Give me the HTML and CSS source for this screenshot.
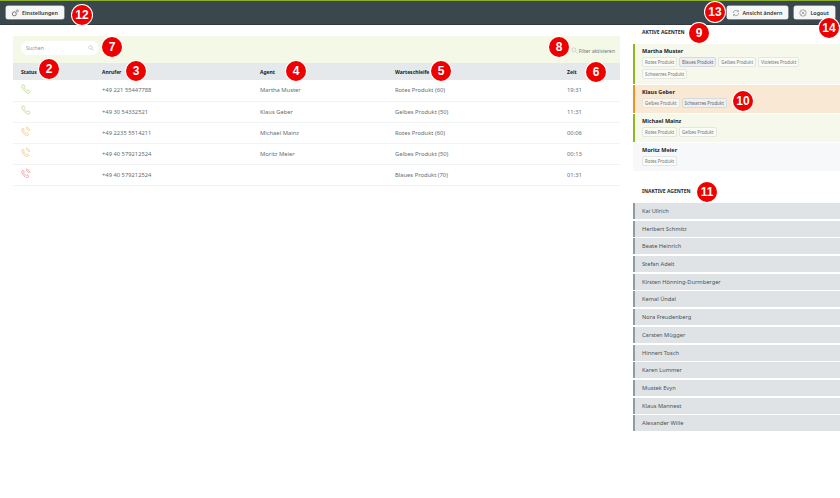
FILE: index.html
```
<!DOCTYPE html>
<html lang="de">
<head>
<meta charset="utf-8">
<title>Agenten</title>
<link rel="stylesheet" href="styles.css">
</head>
<body>
<svg class="defs" width="0" height="0">
  <defs>
    <symbol id="phone" viewBox="0 0 12 12"><path d="M1.6 1.4 3.2.9l1.5 2.3-1 1c.5 1.4 2.2 3.3 3.8 3.9l1-1 2.3 1.6-.6 1.6c-.3.6-1.1.9-1.9.7C5 9.600 2 6.500 1 3.300c-.2-.8 0-1.600.6-1.900Z" fill="none" stroke="currentColor" stroke-width="1"/></symbol>
    <symbol id="phone-out" viewBox="0 0 12 12"><path d="M1.3 3.400 2.700 2.800l1.300 2-.9.9c.4 1.200 1.800 2.800 3.200 3.300l.9-.9 2 1.400-.5 1.400c-.3.5-1 .8-1.600.6C4.400 10.800 1.800 8.200.9 5.100c-.2-.7 0-1.400.4-1.700Z" fill="none" stroke="currentColor" stroke-width="1"/><path d="M6 1.200c2.500.2 4.500 2.200 4.800 4.700M6 3c1.500.1 2.800 1.400 3 3" fill="none" stroke="currentColor" stroke-width="1"/></symbol>
    <symbol id="search" viewBox="0 0 12 12"><circle cx="5" cy="5" r="3.500" fill="none" stroke="currentColor" stroke-width="1.200"/><path d="m7.600 7.600 3.400 3.400" stroke="currentColor" stroke-width="1.400"/></symbol>
  </defs>
</svg>
<div class="app">
  <header class="topbar">
    <button class="btn"><svg class="btn-icon" viewBox="0 0 12 12"><circle cx="5" cy="7.300" r="3" fill="none" stroke="#777" stroke-width="1.500"/><circle cx="9.500" cy="2.800" r="1.600" fill="none" stroke="#777" stroke-width="1"/></svg>Einstellungen</button>
    <div class="topbar-right">
      <button class="btn"><svg class="btn-icon" viewBox="0 0 12 12"><path d="M2 6a4 4 0 0 1 7-2.600M10 6a4 4 0 0 1-7 2.600" fill="none" stroke="#777" stroke-width=".9"/><path d="M9.700 1.500v2.400H7.400M2.300 10.500V8.100h2.300" fill="none" stroke="#777" stroke-width=".8"/></svg>Ansicht ändern</button>
      <button class="btn"><svg class="btn-icon" viewBox="0 0 12 12"><circle cx="6" cy="6" r="4.800" fill="none" stroke="#777" stroke-width=".9"/><path d="m3.800 3.800 4.400 4.400M8.200 3.800 3.800 8.200" stroke="#777" stroke-width=".9"/></svg>Logout</button>
    </div>
  </header>
  <div class="content">
    <main class="calls">
      <div class="filterbar">
        <label class="search"><span>Suchen</span><svg class="search-icon"><use href="#search"/></svg></label>
        <div class="filter-toggle"><svg class="filter-icon"><use href="#search"/></svg>Filter aktivieren</div>
      </div>
      <table class="table">
        <thead>
          <tr><th class="c1">Status</th><th class="c2">Anrufer</th><th class="c3">Agent</th><th class="c4">Warteschleife</th><th>Zeit</th></tr>
        </thead>
        <tbody>
          <tr><td><svg class="ph green"><use href="#phone"/></svg></td><td>+49 221 55447788</td><td>Martha Muster</td><td>Rotes Produkt (60)</td><td>19:31</td></tr>
          <tr><td><svg class="ph green"><use href="#phone"/></svg></td><td>+49 30 54332521</td><td>Klaus Geber</td><td>Gelbes Produkt (50)</td><td>11:31</td></tr>
          <tr><td><svg class="ph orange"><use href="#phone-out"/></svg></td><td>+49 2235 5514211</td><td>Michael Mainz</td><td>Rotes Produkt (60)</td><td>00:06</td></tr>
          <tr><td><svg class="ph orange"><use href="#phone-out"/></svg></td><td>+49 40 579212524</td><td>Moritz Meier</td><td>Gelbes Produkt (50)</td><td>00:13</td></tr>
          <tr><td><svg class="ph red"><use href="#phone-out"/></svg></td><td>+49 40 579212524</td><td></td><td>Blaues Produkt (70)</td><td>01:31</td></tr>
        </tbody>
      </table>
    </main>
    <aside class="side">
      <h2 class="side-title">Aktive Agenten</h2>
      <section class="agent free">
        <h3>Martha Muster</h3>
        <div class="tags"><span class="tag">Rotes Produkt</span><span class="tag on">Blaues Produkt</span><span class="tag">Gelbes Produkt</span><span class="tag">Violettes Produkt</span><span class="tag">Schwarzes Produkt</span></div>
      </section>
      <section class="agent busy">
        <h3>Klaus Geber</h3>
        <div class="tags"><span class="tag">Gelbes Produkt</span><span class="tag on">Schwarzes Produkt</span></div>
      </section>
      <section class="agent free">
        <h3>Michael Mainz</h3>
        <div class="tags"><span class="tag">Rotes Produkt</span><span class="tag">Gelbes Produkt</span></div>
      </section>
      <section class="agent idle">
        <h3>Moritz Meier</h3>
        <div class="tags"><span class="tag">Rotes Produkt</span></div>
      </section>
      <h2 class="side-title second">Inaktive Agenten</h2>
      <ul class="inactive">
        <li>Kai Ullrich</li><li>Heribert Schmitz</li><li>Beate Heinrich</li><li>Stefan Adelt</li><li>Kirsten Hönning-Durmberger</li><li>Kemal Ündal</li><li>Nora Freudenberg</li><li>Carsten Mügger</li><li>Hinnert Tosch</li><li>Karen Lummer</li><li>Mustek Evyn</li><li>Klaus Mannest</li><li>Alexander Wille</li>
      </ul>
    </aside>
  </div>
  <span class="pin p2">2</span><span class="pin p3">3</span><span class="pin p4">4</span><span class="pin p5">5</span><span class="pin p6">6</span><span class="pin p7">7</span><span class="pin p8">8</span><span class="pin p9">9</span><span class="pin p10">10</span><span class="pin p11">11</span><span class="pin p12">12</span><span class="pin p13">13</span><span class="pin p14">14</span>
</div>
</body>
</html>
```
FILE: styles.css
```
* { box-sizing: border-box; }
html, body { margin: 0; padding: 0; background: #fff; }
body { font-family: "Noto Sans", "Open Sans", sans-serif; font-size: 6px; color: #5a6165; }
.defs { position: absolute; }
.app { position: relative; width: 840px; height: 498px; overflow: hidden; }

.topbar { height: 25px; padding: 5px 5px 0 6px; display: flex; justify-content: space-between; align-items: flex-start; background: #3a484d; border-top: 1px solid #8db02c; border-bottom: 1px solid #2e3a3e; }
.topbar-right { display: flex; gap: 6px; }
.btn { height: 13px; padding: 0 6px 0 5px; display: flex; align-items: center; gap: 3px; background: #f5f6f6; border: 0; border-radius: 2px; font: 600 5.400px "Noto Sans", sans-serif; color: #2e3538; box-shadow: 0 0 0 .5px #c8cccd; }
.btn-icon { width: 8px; height: 8px; flex: none; }

.content { display: flex; align-items: flex-start; }
.calls { width: 607px; margin: 11px 0 0 13px; }
.filterbar { height: 27px; padding: 5px 5px 0 8px; display: flex; justify-content: space-between; background: #f4f8e6; }
.search { width: 78px; height: 14px; padding: 0 5px; display: flex; align-items: center; justify-content: space-between; background: #fff; border-radius: 7px; color: #8d9396; font-size: 5.200px; }
.search-icon { width: 6px; height: 6px; color: #b4b8ba; }
.filter-toggle { margin-top: 5px; display: flex; align-items: center; gap: 1px; font-size: 5px; color: #70777a; height: 9px; }
.filter-icon { width: 7px; height: 7px; color: #c4c9bf; }

.table { width: 100%; border-collapse: collapse; table-layout: fixed; }
.table th { height: 17px; padding: 0 0 0 8px; text-align: left; font-size: 5px; font-weight: 700; color: #17191a; background: #e6e9eb; }
.table td { height: 21px; padding: 0 0 0 8px; font-size: 5.800px; color: #666d71; border-bottom: 1px solid #f2f3f4; }
.c1 { width: 81px; }
.c2 { width: 158px; }
.c3 { width: 135px; }
.c4 { width: 172px; }
.ph { display: block; width: 10px; height: 10px; margin: -3px 0 0 0; }
.green { color: #bcd88f; }
.orange { color: #f2c88e; }
.red { color: #f2979c; }

.side { width: 207px; margin-left: 13px; }
.side-title { margin: 0; padding: 3px 0 0 9px; height: 19px; font-size: 5px; font-weight: 700; text-transform: uppercase; color: #23282a; line-height: 8px; }
.second { height: 21px; margin-top: 11px; padding-top: 5px; }
.agent { padding: 2px 6px 5.500px 7px; margin-bottom: 1px; border-left: 2px solid transparent; }
.agent h3 { margin: 0; font-size: 5.500px; line-height: 10px; font-weight: 700; color: #1e2325; }
.free { background: #f5f8ea; border-left-color: #8db81e; }
.busy { background: #f8e8d4; border-left-color: #e8961f; }
.idle { background: #f6f8fa; border-left-color: transparent; }
.tags { display: flex; flex-wrap: wrap; gap: 2.500px 2px; margin-top: 1px; }
.tag { height: 9.500px; padding: 0 2px; font-size: 4.400px; line-height: 9px; color: #70777a; border: .5px solid #e4e6e2; border-radius: 2px; background: rgba(255,255,255,.5); }
.tag.on { background: #eef0f2; border-color: #d6dade; color: #5f666a; }

.inactive { list-style: none; margin: 0; padding: 0; }
.inactive li { height: 16px; margin-bottom: 1.700px; padding-left: 7px; line-height: 16px; font-size: 5.700px; color: #4b5256; background: #dfe3e5; border-left: 2px solid #8e9ca8; }

.pin { position: absolute; width: 20px; height: 20px; border-radius: 50%; background: #ee0000; color: #fff; font: 700 12px/20px "Liberation Sans", Arial, sans-serif; text-align: center; box-shadow: 0 0 0 1px #fff; }
.p2 { left: 39px; top: 59px; }
.p3 { left: 126px; top: 61px; }
.p4 { left: 286px; top: 61px; }
.p5 { left: 431px; top: 61px; }
.p6 { left: 586px; top: 62px; }
.p7 { left: 102px; top: 37px; }
.p8 { left: 549px; top: 37px; }
.p9 { left: 689px; top: 23px; }
.p10 { left: 733px; top: 91px; }
.p11 { left: 697px; top: 182px; }
.p12 { left: 72px; top: 5px; }
.p13 { left: 705px; top: 2px; }
.p14 { left: 819px; top: 18px; }
```
